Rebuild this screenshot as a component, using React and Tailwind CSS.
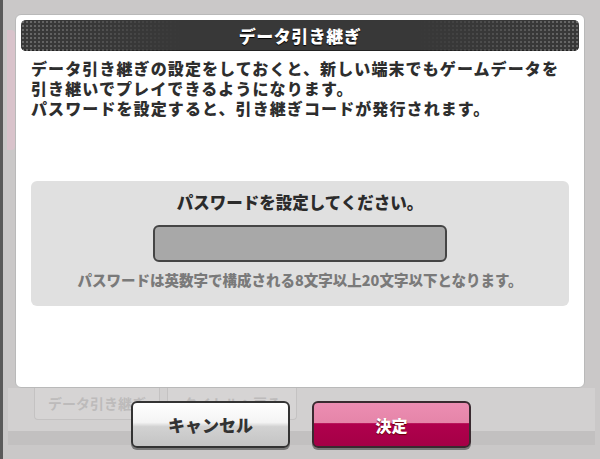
const FONT = { fontFamily: '"Noto Sans CJK JP", "Noto Sans", sans-serif' };

function TitleBar() {
  return (
    <div className="relative mx-[5px] mt-[5px] flex h-[31px] items-center justify-center overflow-hidden rounded-[5px] bg-[#383838] shadow-[inset_0_-1px_0_#222]">
      <div className="absolute inset-y-0 left-0 w-[160px] bg-[radial-gradient(circle,#6a6a6a_1px,transparent_1.3px)] bg-[length:4px_4px] [mask-image:linear-gradient(to_right,black,transparent)]" />
      <div className="absolute inset-y-0 right-0 w-[160px] bg-[radial-gradient(circle,#6a6a6a_1px,transparent_1.3px)] bg-[length:4px_4px] [mask-image:linear-gradient(to_left,black,transparent)]" />
      <span className="relative text-[17px] font-black tracking-[0.5px] text-white [text-shadow:0_1px_1px_#000]">
        データ引き継ぎ
      </span>
    </div>
  );
}

function PasswordBox() {
  return (
    <div className="mx-[15px] mt-[63px] flex h-[125px] flex-col items-center rounded-[6px] bg-[#e0e0e0] pt-[10px]">
      <div className="text-[16.5px] font-black leading-[22px] text-[#2b2b2b]">パスワードを設定してください。</div>
      <div className="mt-[12px] h-[37px] w-[294px] rounded-[6px] border-2 border-[#454545] bg-[#a8a8a8]" />
      <div className="mt-[9px] text-[14.5px] font-black leading-[18px] text-[#7a7a7a]">
        パスワードは英数字で構成される8文字以上20文字以下となります。
      </div>
    </div>
  );
}

function GhostButton({ label, width }) {
  return (
    <div
      className={`flex h-[32px] items-center justify-center rounded-b-[4px] border border-t-0 border-[#c4c2c2] bg-[#d6d4d4] text-[14px] font-bold text-[#bdbbbb] ${width}`}
    >
      {label}
    </div>
  );
}

export default function App() {
  return (
    <div style={FONT} className="relative h-[459px] w-[600px] overflow-hidden border-l-[3px] border-[#5a5a5a] bg-[#cac8c8]">
      <div className="absolute left-[4px] top-[30px] h-[120px] w-[8px] rounded-r bg-[#d9c3cb]" />
      <div className="relative ml-[12px] mr-[15px] pt-[14px]">
        <div className="h-[374px] rounded-[6px] border border-[#b9b9b9] bg-white">
          <TitleBar />
          <div className="mt-[7px] px-[15px] text-[16px] font-black leading-[20px] tracking-[1.1px] text-[#2e2e2e]">
            <p>データ引き継ぎの設定をしておくと、新しい端末でもゲームデータを</p>
            <p>引き継いでプレイできるようになります。</p>
            <p>パスワードを設定すると、引き継ぎコードが発行されます。</p>
          </div>
          <PasswordBox />
        </div>
      </div>

      <div className="relative mx-[5px] h-[57px] border-b-[14px] border-[#c2c0c0] bg-[#d2d0d0]">
        <div className="flex gap-[7px] pl-[26px]">
          <GhostButton label="データ引き継ぎ" width="w-[126px]" />
          <GhostButton label="タイトルへ戻る" width="w-[130px]" />
        </div>
      </div>

      <div className="absolute left-[128px] top-[401px] flex gap-[22px]">
        <button className="flex h-[47px] w-[159px] items-center justify-center rounded-[6px] border-2 border-[#333] bg-[linear-gradient(to_bottom,#ffffff_0%,#f4f4f4_45%,#d2d2d2_55%,#c4c4c4_100%)] text-[17px] font-black text-[#333] shadow-[0_2px_0_#777]">
          キャンセル
        </button>
        <button className="flex h-[47px] w-[159px] items-center justify-center rounded-[6px] border-2 border-[#3a2a30] bg-[linear-gradient(to_bottom,#ec8db2_0%,#e585a9_46%,#b0004d_48%,#a50046_100%)] text-[16px] font-black text-white shadow-[0_2px_0_#777] [text-shadow:0_1px_1px_#600]">
          決定
        </button>
      </div>
    </div>
  );
}
